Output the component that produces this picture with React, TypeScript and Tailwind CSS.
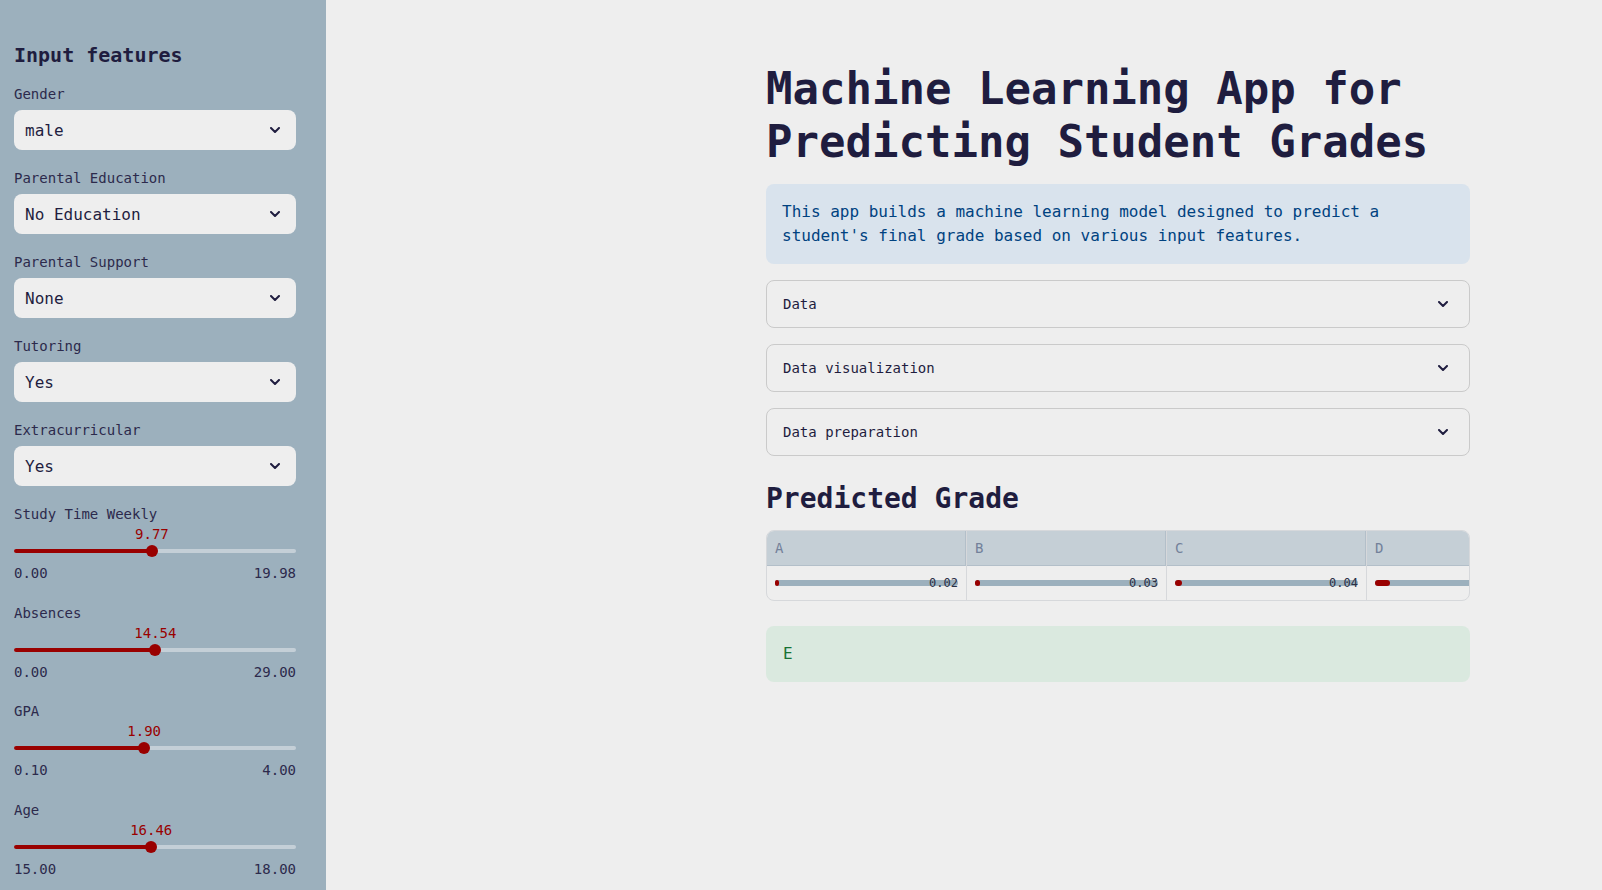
const mono = "font-['DejaVu_Sans_Mono',monospace]"

interface SelectField {
  label: string
  value: string
}

interface SliderField {
  label: string
  value: number
  min: number
  max: number
}

function Chevron({ className }: { className?: string }) {
  return (
    <svg viewBox="0 0 10 6" className={className} fill="none">
      <path d="M1 1 L5 5 L9 1" stroke="#1f1d3f" strokeWidth="2" strokeLinecap="round" strokeLinejoin="round" />
    </svg>
  )
}

function SelectBox({ field }: { field: SelectField }) {
  return (
    <div className="mb-[18px]">
      <div className="h-[20px] leading-[20px] text-[14px] mb-[6px] text-[#2c2a4c]">{field.label}</div>
      <div className="h-[40px] rounded-[8px] bg-[#eeeeee] flex items-center justify-between pl-[11px] pr-[16px]">
        <span className="text-[16px] pt-[2px] text-[#1f1d3f]">{field.value}</span>
        <Chevron className="w-[10px] h-[6px]" />
      </div>
    </div>
  )
}

function Slider({ field }: { field: SliderField }) {
  const pct = ((field.value - field.min) / (field.max - field.min)) * 100
  return (
    <div className="mb-[19.5px]">
      <div className="h-[20px] leading-[20px] text-[14px] text-[#2c2a4c]">{field.label}</div>
      <div className="relative h-[20px]">
        <span
          className="absolute top-0 -translate-x-1/2 leading-[20px] text-[14px] text-[#990000]"
          style={{ left: `${pct}%` }}
        >
          {field.value.toFixed(2)}
        </span>
      </div>
      <div className="relative h-[12px] mt-[1px]">
        <div className="absolute top-[4px] left-0 h-[4px] w-full rounded-full bg-[#c4cfd7]" />
        <div className="absolute top-[4px] left-0 h-[4px] rounded-full bg-[#990000]" style={{ width: `${pct}%` }} />
        <div
          className="absolute top-0 h-[12px] w-[12px] -translate-x-1/2 rounded-full bg-[#990000]"
          style={{ left: `${pct}%` }}
        />
      </div>
      <div className="mt-[6px] flex justify-between h-[20px] leading-[20px] text-[14px] text-[#2c2a4c]">
        <span>{field.min.toFixed(2)}</span>
        <span>{field.max.toFixed(2)}</span>
      </div>
    </div>
  )
}

function Expander({ title }: { title: string }) {
  return (
    <div className="h-[48px] mb-[16px] rounded-[8px] border border-[#cacaca] flex items-center justify-between pl-[16px] pr-[21px]">
      <span className="text-[14px] text-[#1f1d3f]">{title}</span>
      <Chevron className="w-[10px] h-[6px]" />
    </div>
  )
}

export default function App() {
  const selects: SelectField[] = [
    { label: "Gender", value: "male" },
    { label: "Parental Education", value: "No Education" },
    { label: "Parental Support", value: "None" },
    { label: "Tutoring", value: "Yes" },
    { label: "Extracurricular", value: "Yes" },
  ]

  const sliders: SliderField[] = [
    { label: "Study Time Weekly", value: 9.77, min: 0, max: 19.98 },
    { label: "Absences", value: 14.54, min: 0, max: 29 },
    { label: "GPA", value: 1.9, min: 0.1, max: 4 },
    { label: "Age", value: 16.46, min: 15, max: 18 },
  ]

  const grades = [
    { grade: "A", prob: 0.02 },
    { grade: "B", prob: 0.03 },
    { grade: "C", prob: 0.04 },
    { grade: "D", prob: 0.08 },
  ]

  return (
    <div className={`${mono} flex h-screen overflow-hidden bg-[#eeeeee]`}>
      {/* sidebar */}
      <aside className="w-[326px] shrink-0 h-full bg-[#9cb0bd] pt-[41px] pl-[14px] pr-[30px]">
        <h2 className="text-[20px] leading-[28px] font-bold text-[#1f1d3f] mb-[15px]">Input features</h2>
        {selects.map((s, i) => (
          <SelectBox key={i} field={s} />
        ))}
        {sliders.map((s, i) => (
          <Slider key={i} field={s} />
        ))}
      </aside>

      {/* main */}
      <main className="flex-1 pt-[62px] pl-[440px]">
        <div className="w-[704px]">
          <h1 className="text-[44px] leading-[53px] font-bold text-[#1f1d3f] mb-[16px]">
            Machine Learning App for Predicting Student Grades
          </h1>

          <div className="rounded-[8px] bg-[#d9e3ed] px-[16px] py-[16px] text-[16px] leading-[24px] text-[#004280] mb-[16px]">
            This app builds a machine learning model designed to predict a student's final grade based on various input
            features.
          </div>

          <Expander title="Data" />
          <Expander title="Data visualization" />
          <Expander title="Data preparation" />

          <h3 className="mt-[26px] text-[28px] leading-[34px] font-bold text-[#1f1d3f] mb-[14px]">Predicted Grade</h3>

          <div className="rounded-[8px] border border-[#d6d8db] overflow-hidden">
            <div className="flex w-max">
              {grades.map((g, i) => (
                <div key={i} className="w-[200px] shrink-0 border-r border-[#d6d8db]">
                  <div className="h-[35px] bg-[#c5cfd6] border-b border-r border-[#b3bfc9] flex items-center pl-[8px] text-[14px] text-[#73819a]">
                    {g.grade}
                  </div>
                  <div className="relative h-[34px] flex items-center px-[8px]">
                    <div className="relative h-[6px] w-full rounded-full bg-[#9cb0bd]">
                      <div
                        className="absolute left-0 top-0 h-[6px] rounded-full bg-[#990000]"
                        style={{ width: `${Math.max(g.prob * 100, 2)}%` }}
                      />
                    </div>
                    {i < 3 && (
                      <span className="absolute right-[8px] text-[12px] text-[#2a2f45]">{g.prob.toFixed(2)}</span>
                    )}
                  </div>
                </div>
              ))}
            </div>
          </div>

          <div className="mt-[25px] h-[56px] rounded-[8px] bg-[#dae9df] flex items-center px-[17px] text-[16px] text-[#177233]">
            E
          </div>
        </div>
      </main>
    </div>
  )
}
